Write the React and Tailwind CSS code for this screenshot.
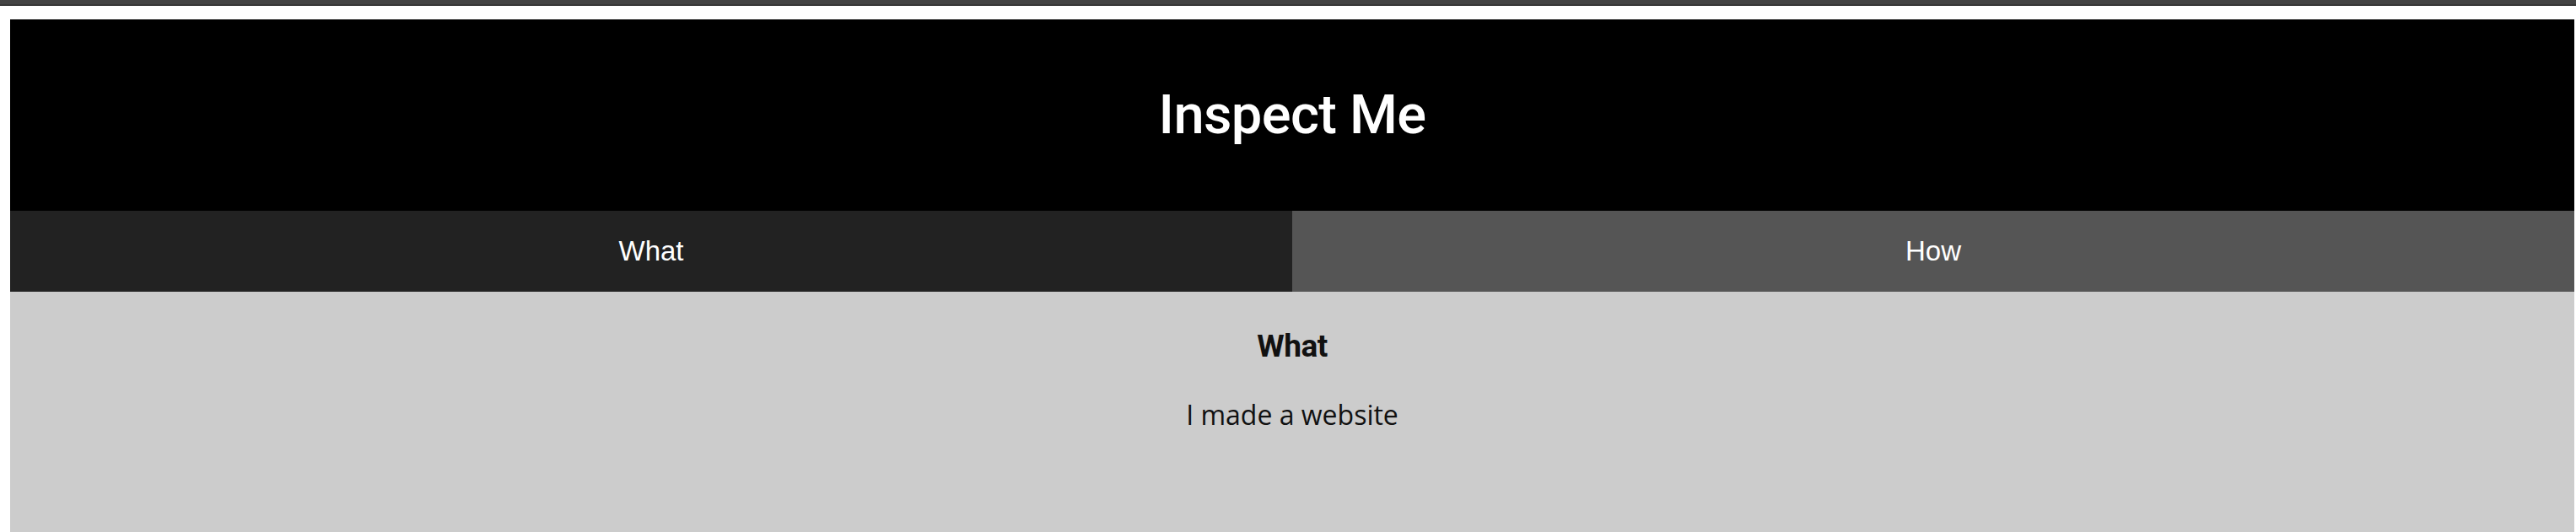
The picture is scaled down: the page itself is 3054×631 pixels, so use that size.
export default function App() {
  return (
    <div className="min-h-screen bg-white">
      <div className="h-[5px] bg-[#444444]" />
      <div className="h-[2px] bg-[#383838]" />
      <main className="ml-[12px] mr-[2px] mt-[16px]">
        <header className="flex h-[227px] items-center justify-center bg-black">
          <h1 className="font-['Roboto',sans-serif] text-[65px] font-medium leading-none tracking-[-0.6px] text-white">Inspect Me</h1>
        </header>

        <nav className="grid h-[96px] grid-cols-2 font-['Liberation_Sans',Arial,sans-serif] text-[33px] text-white">
          <button className="flex items-center justify-center bg-[#222222]">What</button>
          <button className="flex items-center justify-center bg-[#555555]">How</button>
        </nav>

        <section className="min-h-[300px] bg-[#cccccc] pt-[42px] text-center text-[#111111]">
          <h2 className="font-['Roboto',sans-serif] text-[37px] font-bold leading-[46px] tracking-[-0.5px]">What</h2>
          <p className="mt-[36px] font-['Open_Sans',sans-serif] text-[32px] leading-[44px]">I made a website</p>
        </section>
      </main>
    </div>
  );
}
